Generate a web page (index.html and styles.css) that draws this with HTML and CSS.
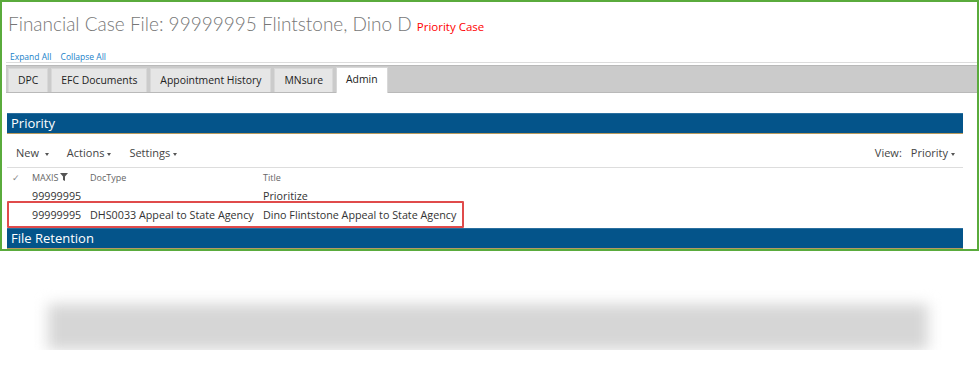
FILE: index.html
```html
<!DOCTYPE html>
<html lang="en">
<head>
    <meta charset="UTF-8">
    <title>Financial Case File</title>
    <link rel="stylesheet" href="styles.css">
</head>
<body>
    <div class="frame">
        <h1 class="title">Financial Case File: 99999995 Flintstone, Dino D <span class="priority-flag">Priority Case</span></h1>
        <div class="expand-links">
            <a href="#">Expand All</a>
            <a href="#">Collapse All</a>
        </div>
        <div class="tab-wrap">
            <div class="tab-bar">
                <div class="tab">DPC</div>
                <div class="tab">EFC Documents</div>
                <div class="tab">Appointment History</div>
                <div class="tab">MNsure</div>
                <div class="tab active">Admin</div>
            </div>
        </div>

        <div class="section">
            <div class="section-head">Priority</div>
            <div class="toolbar">
                <span class="menu">New <span class="caret"></span></span>
                <span class="menu">Actions<span class="caret"></span></span>
                <span class="menu">Settings<span class="caret"></span></span>
                <span class="spacer"></span>
                <span class="view-label">View:</span>
                <span class="menu">Priority<span class="caret"></span></span>
            </div>
            <div class="list">
                <div class="row head">
                    <span class="col-check">&#10003;</span>
                    <span class="col-maxis">MAXIS<svg class="filter" width="8" height="8" viewBox="0 0 8 8"><path d="M0 0h8L5 3.6V8L3 7V3.6z" fill="#555"/></svg></span>
                    <span class="col-doc">DocType</span>
                    <span class="col-title">Title</span>
                </div>
                <div class="row first">
                    <span class="col-check"></span>
                    <span class="col-maxis">99999995</span>
                    <span class="col-doc"></span>
                    <span class="col-title">Prioritize</span>
                </div>
                <div class="row marked">
                    <span class="col-check"></span>
                    <span class="col-maxis">99999995</span>
                    <span class="col-doc">DHS0033 Appeal to State Agency</span>
                    <span class="col-title">Dino Flintstone Appeal to State Agency</span>
                </div>
            </div>
        </div>

        <div class="section-head">File Retention</div>
    </div>

    <div class="shadow"></div>
</body>
</html>
```

FILE: styles.css
```css
body {
    margin: 0;
    background-color: #fff;
    font-family: "Open Sans", Arial, sans-serif;
    color: #444;
}

.frame {
    box-sizing: border-box;
    width: 979px;
    height: 251px;
    border: 2px solid #5aab3c;
    padding: 0 0 0 5px;
    overflow: hidden;
}

.title {
    margin: 0;
    padding: 10px 0 0 1px;
    height: 24px;
    line-height: 24px;
    font-family: Lato, "Open Sans", sans-serif;
    font-size: 19px;
    font-weight: 300;
    color: #777;
    white-space: nowrap;
}

.priority-flag {
    font-family: "Open Sans", sans-serif;
    font-size: 11.5px;
    font-weight: 400;
    color: #f00;
}

.expand-links {
    margin-top: 15px;
    padding-left: 3px;
    height: 11px;
    line-height: 11px;
    font-size: 8.5px;
}

.expand-links a {
    color: #1a7fc9;
    text-decoration: none;
    margin-right: 7px;
}

.tab-wrap {
    margin-left: -1px;
    border-top: 1px solid #dcdcdc;
    padding-top: 2px;
}

.tab-bar {
    box-sizing: border-box;
    display: flex;
    align-items: flex-end;
    height: 28px;
    background-color: #cbcbcb;
    border-top: 1px solid #b9b9b9;
    border-bottom: 1px solid #b9b9b9;
    padding-left: 2px;
}

.tab {
    height: 23px;
    line-height: 23px;
    padding: 0 9px;
    margin-right: 3px;
    background-color: #e6e6e6;
    border: 1px solid #d8d8d8;
    border-bottom: none;
    font-size: 10.4px;
    color: #222;
    white-space: nowrap;
}

.tab.active {
    background-color: #fff;
    height: 25px;
    margin-bottom: -1px;
}

.section {
    margin-top: 20px;
}

.section-head {
    box-sizing: border-box;
    width: 956px;
    height: 21px;
    line-height: 19px;
    padding-left: 4px;
    background-color: #04548a;
    border-top: 1px solid #2a6f9f;
    border-bottom: 1px solid #b89a5e;
    color: #fff;
    font-size: 13px;
}

.toolbar {
    box-sizing: border-box;
    display: flex;
    align-items: center;
    width: 956px;
    height: 34px;
    padding: 4px 8px 0 9px;
    border-bottom: 1px solid #ddd;
    font-size: 11px;
    color: #444;
}

.menu {
    margin-right: 18px;
    white-space: nowrap;
}

.menu:last-child {
    margin-right: 0;
}

.caret {
    display: inline-block;
    margin-left: 3px;
    vertical-align: middle;
    border-left: 2.5px solid transparent;
    border-right: 2.5px solid transparent;
    border-top: 3px solid #555;
}

.spacer {
    flex: 1;
}

.view-label {
    margin-right: 9px;
}

.list {
    width: 956px;
}

.row {
    box-sizing: border-box;
    display: flex;
    align-items: center;
    font-size: 10.75px;
    color: #333;
    white-space: nowrap;
}

.row.head {
    height: 19px;
    font-size: 9px;
    color: #666;
}

.row.first {
    height: 14px;
    padding-top: 3px;
}

.row.marked {
    width: 457px;
    height: 27px;
    border: 2px solid #e04b4b;
    border-radius: 1px;
}

.row.marked .col-check {
    width: 23px;
}

.col-check {
    width: 25px;
    padding-left: 5px;
    box-sizing: border-box;
    color: #888;
}

.col-maxis {
    width: 58px;
}

.col-doc {
    width: 173px;
}

.filter {
    margin-left: 2px;
}

.shadow {
    width: 880px;
    height: 46px;
    margin: 53px 0 0 48px;
    background-color: #d6d6d6;
    filter: blur(7px);
}
```
